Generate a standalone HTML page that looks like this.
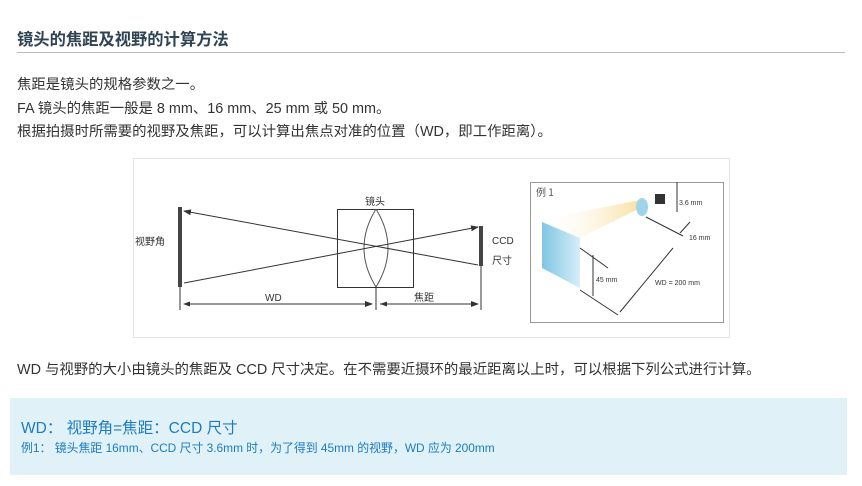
<!DOCTYPE html>
<html><head><meta charset="utf-8"><style>
body{margin:0;width:862px;height:486px;background:#fff;font-family:"Liberation Sans","Noto Sans CJK SC",sans-serif;color:#333;position:relative;overflow:hidden}
.t{position:absolute;white-space:nowrap}
</style></head><body>
<div class="t" style="left:17px;top:26px;font-size:16.3px;font-weight:bold;color:#2f4352">镜头的焦距及视野的计算方法</div>
<div style="position:absolute;left:17px;top:52px;width:828px;height:1px;background:#bbb"></div>
<div class="t" style="left:17px;top:74px;font-size:14.4px;line-height:23.5px">焦距是镜头的规格参数之一。<br>FA 镜头的焦距一般是 8 mm、16 mm、25 mm 或 50 mm。<br>根据拍摄时所需要的视野及焦距，可以计算出焦点对准的位置（WD，即工作距离）。</div>
<div style="position:absolute;left:133px;top:158px;width:597px;height:180px;border:1px solid #e4e4e4;box-sizing:border-box"></div>
<svg style="position:absolute;left:0;top:0" width="862" height="486">
<defs><marker id="a" markerWidth="8" markerHeight="6" refX="7" refY="3" orient="auto"><path d="M0,0L8,3L0,6z" fill="#333"/></marker>
<linearGradient id="g" x1="0" x2="1"><stop offset="0" stop-color="#fff" stop-opacity="0"/><stop offset="1" stop-color="#f6d88a"/></linearGradient>
<linearGradient id="b" x1="0" x2="1"><stop offset="0" stop-color="#7fc6e3"/><stop offset="1" stop-color="#d6eef8"/></linearGradient></defs>
<rect x="178" y="207" width="4" height="80" fill="#444"/>
<rect x="337.5" y="209.5" width="76" height="78" fill="none" stroke="#333"/>
<path d="M376,209 Q352,248 376,287 Q400,248 376,209" fill="none" stroke="#555"/>
<rect x="479" y="226" width="4" height="40" fill="#444"/>
<line x1="478" y1="265" x2="184" y2="211" stroke="#333" marker-end="url(#a)"/>
<line x1="184" y1="283" x2="478" y2="227" stroke="#333" marker-end="url(#a)"/>
<line x1="180" y1="287" x2="180" y2="310" stroke="#333"/>
<line x1="376" y1="287" x2="376" y2="310" stroke="#333"/>
<line x1="481" y1="266" x2="481" y2="310" stroke="#333"/>
<line x1="186" y1="304" x2="372" y2="304" stroke="#333" marker-end="url(#a)"/>
<line x1="380" y1="304" x2="478" y2="304" stroke="#333" marker-end="url(#a)"/>
<path d="M380,304l7,-2.5v5z" fill="#333"/><path d="M183,304l7,-2.5v5z" fill="#333"/>
<text x="265" y="301" font-size="10" fill="#333" font-family="Liberation Sans">WD</text>
<text x="414" y="301" font-size="10" fill="#333" font-family="Noto Sans CJK SC">焦距</text>
<text x="365" y="205" font-size="10" fill="#333" font-family="Noto Sans CJK SC">镜头</text>
<text x="135" y="245" font-size="10" fill="#333" font-family="Noto Sans CJK SC">视野角</text>
<text x="492" y="244" font-size="10" fill="#333" font-family="Liberation Sans">CCD</text>
<text x="492" y="264" font-size="10" fill="#333" font-family="Noto Sans CJK SC">尺寸</text>
<rect x="530.5" y="182.5" width="193" height="140" fill="#fff" stroke="#999"/>
<text x="536" y="196" font-size="10" fill="#555" font-family="Noto Sans CJK SC">例 1</text>
<polygon points="542,222 580,238 640,208 640,200 560,216" fill="url(#g)" opacity="0.8"/>
<polygon points="542,222 580,238 580,288 542,268" fill="url(#b)"/>
<ellipse cx="642" cy="207" rx="6" ry="9" fill="#9fd4ea"/>
<rect x="655" y="194" width="10" height="10" fill="#333"/>
<g stroke="#333" fill="none"><line x1="677" y1="182" x2="677" y2="212"/><line x1="646" y1="217" x2="683" y2="236"/><line x1="580" y1="248" x2="608" y2="268"/><line x1="580" y1="290" x2="618" y2="315"/><line x1="593" y1="255" x2="593" y2="296"/><line x1="620" y1="312" x2="673" y2="248"/><line x1="680" y1="233" x2="690" y2="222"/></g>
<text x="679" y="205" font-size="7" fill="#333" font-family="Liberation Sans">3.6 mm</text>
<text x="689" y="240" font-size="7" fill="#333" font-family="Liberation Sans">16 mm</text>
<text x="596" y="282" font-size="7" fill="#333" font-family="Liberation Sans">45 mm</text>
<text x="655" y="285" font-size="7" fill="#333" font-family="Liberation Sans">WD = 200 mm</text>
</svg>
<div class="t" style="left:17px;top:358px;font-size:14.4px">WD 与视野的大小由镜头的焦距及 CCD 尺寸决定。在不需要近摄环的最近距离以上时，可以根据下列公式进行计算。</div>
<div style="position:absolute;left:10px;top:398px;width:837px;height:77px;background:#e1f1f8"></div>
<div class="t" style="left:21px;top:416px;font-size:15.5px;color:#1d7cc0">WD： 视野角=焦距：CCD 尺寸</div>
<div class="t" style="left:21px;top:439px;font-size:11.9px;color:#1d7cc0">例1： 镜头焦距 16mm、CCD 尺寸 3.6mm 时，为了得到 45mm 的视野，WD 应为 200mm</div>
</body></html>
